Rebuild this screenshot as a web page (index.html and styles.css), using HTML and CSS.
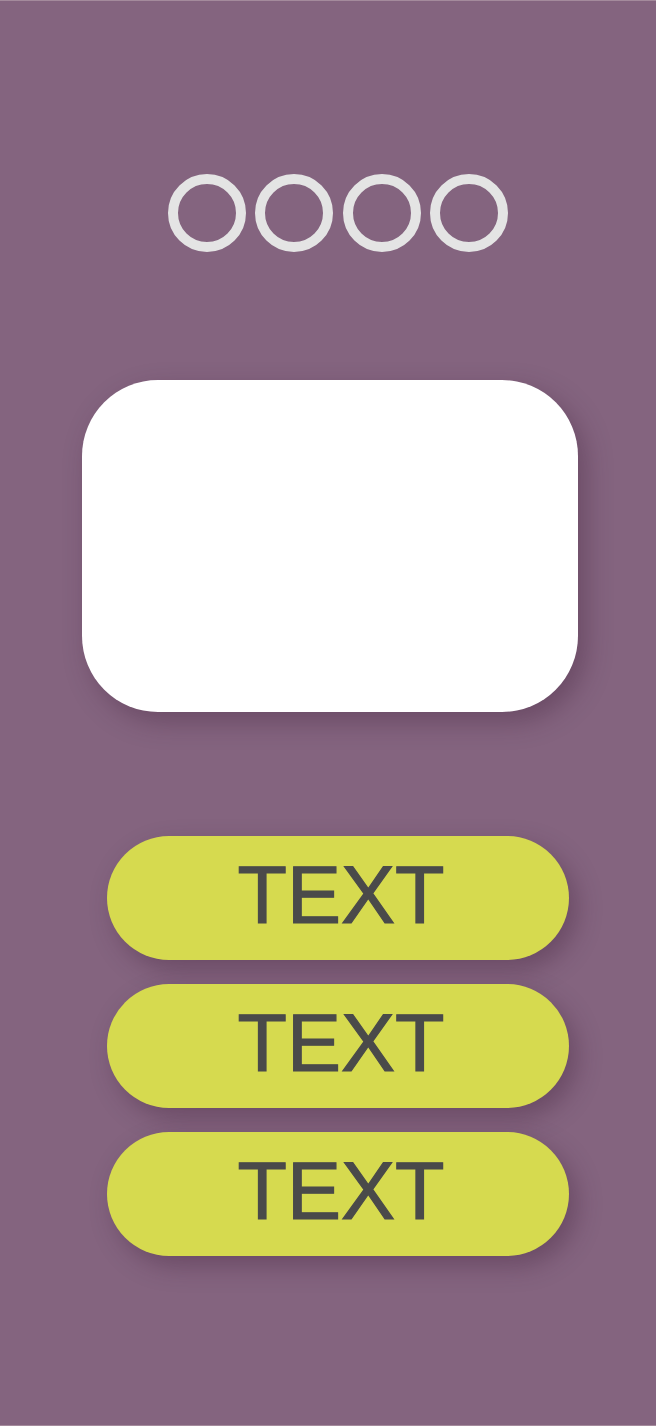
FILE: index.html
```html
<!DOCTYPE html>
<html lang="en">
<head>
<meta charset="utf-8">
<title>Screen</title>
<link rel="stylesheet" href="styles.css">
</head>
<body>
<main class="screen">
  <div class="dots">
    <span class="dot"></span>
    <span class="dot"></span>
    <span class="dot"></span>
    <span class="dot"></span>
  </div>
  <div class="card"></div>
  <div class="actions">
    <button class="pill">TEXT</button>
    <button class="pill">TEXT</button>
    <button class="pill">TEXT</button>
  </div>
</main>
</body>
</html>
```

FILE: styles.css
```css
html, body {
  margin: 0;
  padding: 0;
}

body {
  background: #84647f;
  font-family: "Liberation Sans", Arial, sans-serif;
}

.screen {
  box-sizing: border-box;
  width: 656px;
  height: 1426px;
  border-top: 1px solid #a48a9c;
  border-bottom: 1px solid #a48a9c;
  background: #84647f;
  display: flex;
  flex-direction: column;
  padding-top: 173px;
  overflow: hidden;
}

.dots {
  display: flex;
  gap: 9.3px;
  padding-left: 168px;
}

.dot {
  box-sizing: border-box;
  width: 78px;
  height: 78px;
  border: 10px solid #e4e4e4;
  border-radius: 50%;
}

.card {
  margin: 128px 0 0 82px;
  width: 496px;
  height: 332px;
  background: #ffffff;
  border-radius: 76px;
  box-shadow: 8px 10px 26px rgba(60, 30, 55, 0.35);
}

.actions {
  margin: 124px 0 0 107px;
  display: flex;
  flex-direction: column;
  gap: 24px;
}

.pill {
  width: 462px;
  height: 124px;
  border: none;
  border-radius: 62px;
  background: #d6da4f;
  color: #4a4a4a;
  font-family: "Liberation Sans", Arial, sans-serif;
  font-size: 81px;
  line-height: 1;
  -webkit-text-stroke: 1.2px #4a4a4a;
  padding: 0 0 6px 6px;
  box-shadow: 8px 10px 24px rgba(60, 30, 55, 0.35);
  display: flex;
  align-items: center;
  justify-content: center;
}
```
